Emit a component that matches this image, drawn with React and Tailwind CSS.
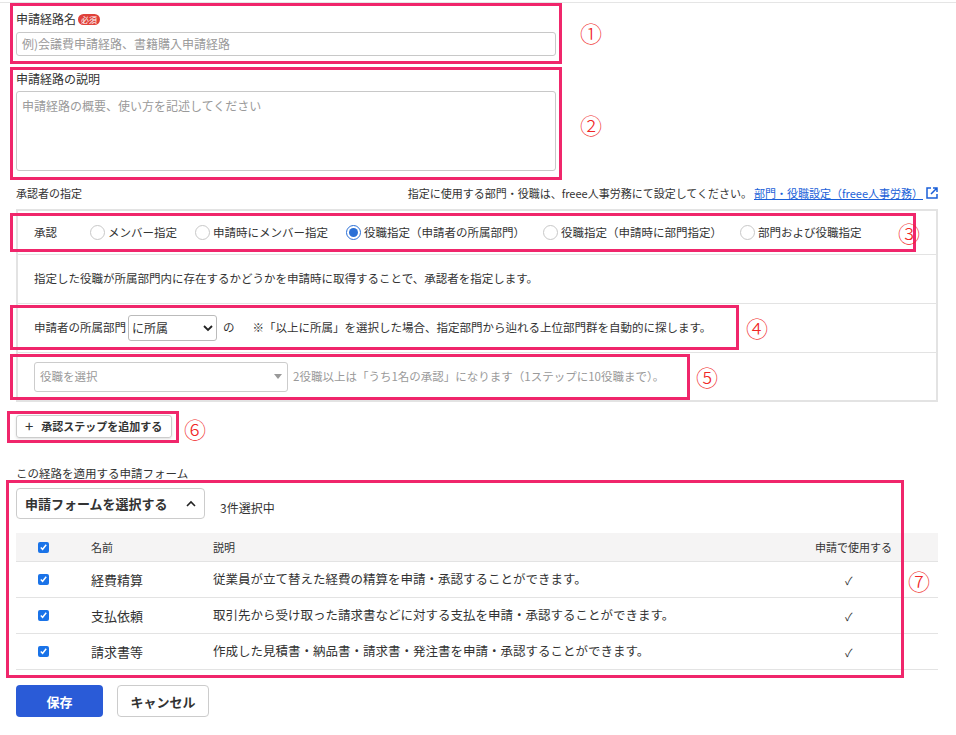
const F = { fontFamily: '"Noto Sans CJK JP","Noto Sans",sans-serif' };

function Radio({ on, label }) {
  return (
    <div className="flex items-center gap-[3px]">
      <span className={`w-[15px] h-[15px] rounded-full border flex items-center justify-center ${on ? 'border-[#2a6fd6]' : 'border-[#c8c8c8]'}`}>
        {on && <span className="w-[9px] h-[9px] rounded-full bg-[#2a6fd6]" />}
      </span>
      <span>{label}</span>
    </div>
  );
}

function Check() {
  return (
    <span className="w-[11px] h-[11px] rounded-[2px] bg-[#1a73e8] flex items-center justify-center">
      <svg width="9" height="9" viewBox="0 0 10 10"><path d="M2 5l2 2 4-5" stroke="#fff" strokeWidth="1.6" fill="none" /></svg>
    </span>
  );
}

const Box = ({ c }) => <div className={`absolute border-[3px] border-[#f0266b] pointer-events-none ${c}`} />;
const Num = ({ c, n }) => <div className={`absolute text-[#f02626] text-[22px] leading-none font-light ${c}`}>{n}</div>;

const rows = [
  ['経費精算', '従業員が立て替えた経費の精算を申請・承認することができます。'],
  ['支払依頼', '取引先から受け取った請求書などに対する支払を申請・承認することができます。'],
  ['請求書等', '作成した見積書・納品書・請求書・発注書を申請・承認することができます。'],
];

export default function App() {
  return (
    <div style={F} className="relative w-[956px] h-[735px] bg-white text-[12px] text-[#333] overflow-hidden">
      <div className="border-t border-[#e5e5e5] mt-[2px]" />
      <div className="pl-[16px] pr-[18px]">
        <div className="w-[540px] pt-[8px]">
          <div className="flex items-center gap-[2px] h-[16px]">申請経路名<span className="bg-[#e0413a] text-white text-[8px] px-[3px] rounded-[6px] leading-[11px]">必須</span></div>
          <div className="mt-[5px] h-[24px] border border-[#c8c8c8] rounded-[3px] px-[5px] flex items-center text-[#9a9a9a]">例)会議費申請経路、書籍購入申請経路</div>
          <div className="mt-[14px] h-[16px]">申請経路の説明</div>
          <div className="mt-[5px] h-[80px] border border-[#c8c8c8] rounded-[3px] px-[5px] pt-[5px] text-[#9a9a9a]">申請経路の概要、使い方を記述してください</div>
        </div>
        <div className="flex justify-between items-center mt-[14px] text-[11px] h-[16px]">
          <span>承認者の指定</span>
          <span className="flex items-center">指定に使用する部門・役職は、freee人事労務にて設定してください。<span className="text-[#1a5fd8] underline ml-[2px]">部門・役職設定（freee人事労務）</span>
            <svg className="ml-[3px]" width="12" height="12" viewBox="0 0 12 12"><path d="M5 1H1v10h10V7M7 1h4v4M11 1L5 7" stroke="#1a5fd8" strokeWidth="1.5" fill="none" /></svg>
          </span>
        </div>
        <div className="mt-[8px] border-2 border-[#e3e3e3] text-[11.5px]">
          <div className="h-[44px] flex items-center px-[16px] border-b border-[#e3e3e3]">
            <span className="w-[56px]">承認</span>
            <div className="flex gap-[18px]">
              <Radio label="メンバー指定" />
              <Radio label="申請時にメンバー指定" />
              <Radio on label="役職指定（申請者の所属部門）" />
              <Radio label="役職指定（申請時に部門指定）" />
              <Radio label="部門および役職指定" />
            </div>
          </div>
          <div className="h-[49px] flex items-center px-[16px] border-b border-[#e3e3e3]">指定した役職が所属部門内に存在するかどうかを申請時に取得することで、承認者を指定します。</div>
          <div className="h-[49px] flex items-center px-[16px] border-b border-[#e3e3e3]">
            申請者の所属部門
            <span className="mx-[2px] w-[89px] h-[26px] border border-[#bbb] rounded-[3px] flex items-center justify-between px-[3px] text-[12px]">に所属<svg width="10" height="8" viewBox="0 0 10 8"><path d="M1 2l4 4 4-4" stroke="#222" strokeWidth="1.8" fill="none" /></svg></span>
            <span className="ml-[4px]">の</span>
            <span className="ml-[18px]">※「以上に所属」を選択した場合、指定部門から辿れる上位部門群を自動的に探します。</span>
          </div>
          <div className="h-[47px] flex items-center px-[16px] text-[#9a9a9a]">
            <span className="w-[254px] h-[30px] border border-[#ccc] rounded-[3px] flex items-center justify-between px-[5px]">役職を選択<svg width="8" height="6" viewBox="0 0 8 6"><path d="M0 0h8L4 5z" fill="#999" /></svg></span>
            <span className="ml-[5px]">2役職以上は「うち1名の承認」になります（1ステップに10役職まで）。</span>
          </div>
        </div>
        <div className="mt-[13px] w-[156px] h-[23px] border border-[#ccc] rounded-[3px] flex items-center pl-[8px] gap-[8px] font-bold text-[11px] shadow-sm"><span className="text-[15px] font-normal">+</span>承認ステップを追加する</div>
        <div className="mt-[27px] text-[11.5px]">この経路を適用する申請フォーム</div>
        <div className="mt-[6px] flex items-end gap-[15px]">
          <div className="w-[189px] h-[31px] border border-[#ccc] rounded-[4px] flex items-center justify-between px-[8px] font-bold text-[13px]">申請フォームを選択する<svg width="10" height="7" viewBox="0 0 10 7"><path d="M1 6l4-4 4 4" stroke="#222" strokeWidth="1.6" fill="none" /></svg></div>
          <span className="pb-[2px]">3件選択中</span>
        </div>
        <div className="mt-[14px]">
          <div className="h-[29px] bg-[#f5f4f4] border-b border-[#e3e3e3] flex items-center text-[11px]">
            <span className="w-[75px] pl-[22px]"><Check /></span>
            <span className="w-[122px]">名前</span>
            <span className="flex-1">説明</span>
            <span className="w-[123px]">申請で使用する</span>
          </div>
          {rows.map(([n, d]) => (
            <div key={n} className="h-[36px] border-b border-[#e3e3e3] flex items-center text-[13px]">
              <span className="w-[75px] pl-[22px]"><Check /></span>
              <span className="w-[122px]">{n}</span>
              <span className="flex-1 text-[12.5px]">{d}</span>
              <span className="w-[123px] pl-[30px] text-[11px]">✓</span>
            </div>
          ))}
        </div>
        <div className="mt-[15px] flex gap-[14px] font-bold text-[13px]">
          <div className="w-[87px] h-[32px] bg-[#2a5bd7] text-white rounded-[4px] flex items-center justify-center">保存</div>
          <div className="w-[92px] h-[32px] border border-[#ccc] rounded-[4px] flex items-center justify-center">キャンセル</div>
        </div>
      </div>
      <Box c="left-[10px] top-[3px] w-[552px] h-[61px]" />
      <Box c="left-[10px] top-[67px] w-[552px] h-[113px]" />
      <Box c="left-[10px] top-[213px] w-[906px] h-[39px]" />
      <Box c="left-[10px] top-[305px] w-[729px] h-[45px]" />
      <Box c="left-[10px] top-[354px] w-[680px] h-[46px]" />
      <Box c="left-[7px] top-[411px] w-[172px] h-[32px]" />
      <Box c="left-[6px] top-[480px] w-[898px] h-[198px]" />
      <Num n="①" c="left-[580px] top-[21px]" />
      <Num n="②" c="left-[580px] top-[113px]" />
      <Num n="③" c="left-[898px] top-[221px]" />
      <Num n="④" c="left-[746px] top-[316px]" />
      <Num n="⑤" c="left-[696px] top-[365px]" />
      <Num n="⑥" c="left-[184px] top-[417px]" />
      <Num n="⑦" c="left-[908px] top-[569px]" />
    </div>
  );
}
